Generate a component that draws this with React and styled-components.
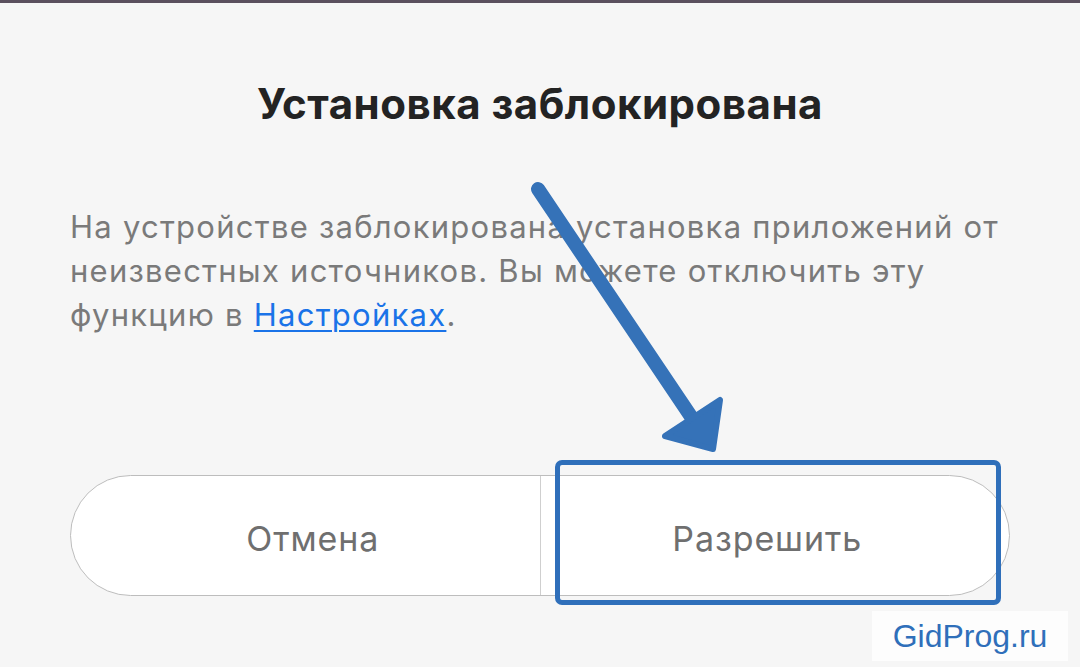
import styled, { createGlobalStyle } from "styled-components";

const GlobalStyle = createGlobalStyle`
  html, body {
    margin: 0;
    padding: 0;
    background: #f6f6f6;
  }
  * {
    box-sizing: border-box;
  }
`;

const Page = styled.div`
  position: relative;
  width: 1080px;
  height: 667px;
  overflow: hidden;
  background: #f6f6f6;
  border-top: 3px solid #5b505e;
  font-family: Inter, "Noto Sans", sans-serif;
`;

const Dialog = styled.div`
  display: flex;
  flex-direction: column;
  padding: 0 70px;
`;

const Title = styled.h1`
  margin: 76px 0 0;
  text-align: center;
  font-size: 42px;
  line-height: 50px;
  font-weight: 700;
  letter-spacing: 0.5px;
  color: #232323;
`;

const Message = styled.p`
  margin: 76px 0 0;
  font-size: 31px;
  line-height: 44px;
  letter-spacing: 1.25px;
  color: #7a7a7a;
`;

const SettingsLink = styled.a`
  color: #1a73e8;
  text-decoration: underline;
  text-underline-offset: 4px;
  text-decoration-thickness: 2px;
`;

const ButtonRow = styled.div`
  position: relative;
  display: flex;
  height: 121px;
  margin-top: 138px;
  background: #fff;
  border: 1px solid #bdbdbd;
  border-radius: 61px;
`;

const Button = styled.button`
  flex: 1;
  border: none;
  background: transparent;
  font-family: inherit;
  font-size: 34px;
  letter-spacing: 0.9px;
  color: #6f6f6f;
  padding: 6px 0 0;
  padding-left: ${(p) => (p.divided ? "0" : "15px")};
  padding-right: ${(p) => (p.divided ? "15px" : "0")};
  border-left: ${(p) => (p.divided ? "1px solid #cfcfcf" : "none")};
`;

const Highlight = styled.div`
  position: absolute;
  left: 484px;
  top: -16px;
  width: 446px;
  height: 145px;
  border: 5px solid #2f6fba;
  border-radius: 7px;
  pointer-events: none;
`;

const ArrowLayer = styled.svg`
  position: absolute;
  left: 0;
  top: 0;
  pointer-events: none;
`;

const Watermark = styled.div`
  position: absolute;
  right: 12px;
  bottom: 6px;
  width: 196px;
  height: 50px;
  display: flex;
  align-items: center;
  justify-content: center;
  background: #fdfdfd;
  font-family: "Liberation Sans", Arial, sans-serif;
  font-size: 32px;
  color: #2f6fba;
`;

export default function App() {
  return (
    <>
      <GlobalStyle />
      <Page>
        <Dialog>
          <Title>Установка заблокирована</Title>
          <Message>
            На устройстве заблокирована установка приложений от
            <br />
            неизвестных источников. Вы можете отключить эту
            <br />
            функцию в <SettingsLink>Настройках</SettingsLink>.
          </Message>
          <ButtonRow>
            <Button>Отмена</Button>
            <Button divided>Разрешить</Button>
            <Highlight />
          </ButtonRow>
        </Dialog>
        <ArrowLayer width="1080" height="667" viewBox="0 0 1080 667">
          <line
            x1="538"
            y1="186"
            x2="694"
            y2="418"
            stroke="#3572b8"
            strokeWidth="14"
            strokeLinecap="round"
          />
          <polygon
            points="665,433 720,397 713,446"
            fill="#3572b8"
            stroke="#3572b8"
            strokeWidth="6"
            strokeLinejoin="round"
          />
        </ArrowLayer>
        <Watermark>GidProg.ru</Watermark>
      </Page>
    </>
  );
}
